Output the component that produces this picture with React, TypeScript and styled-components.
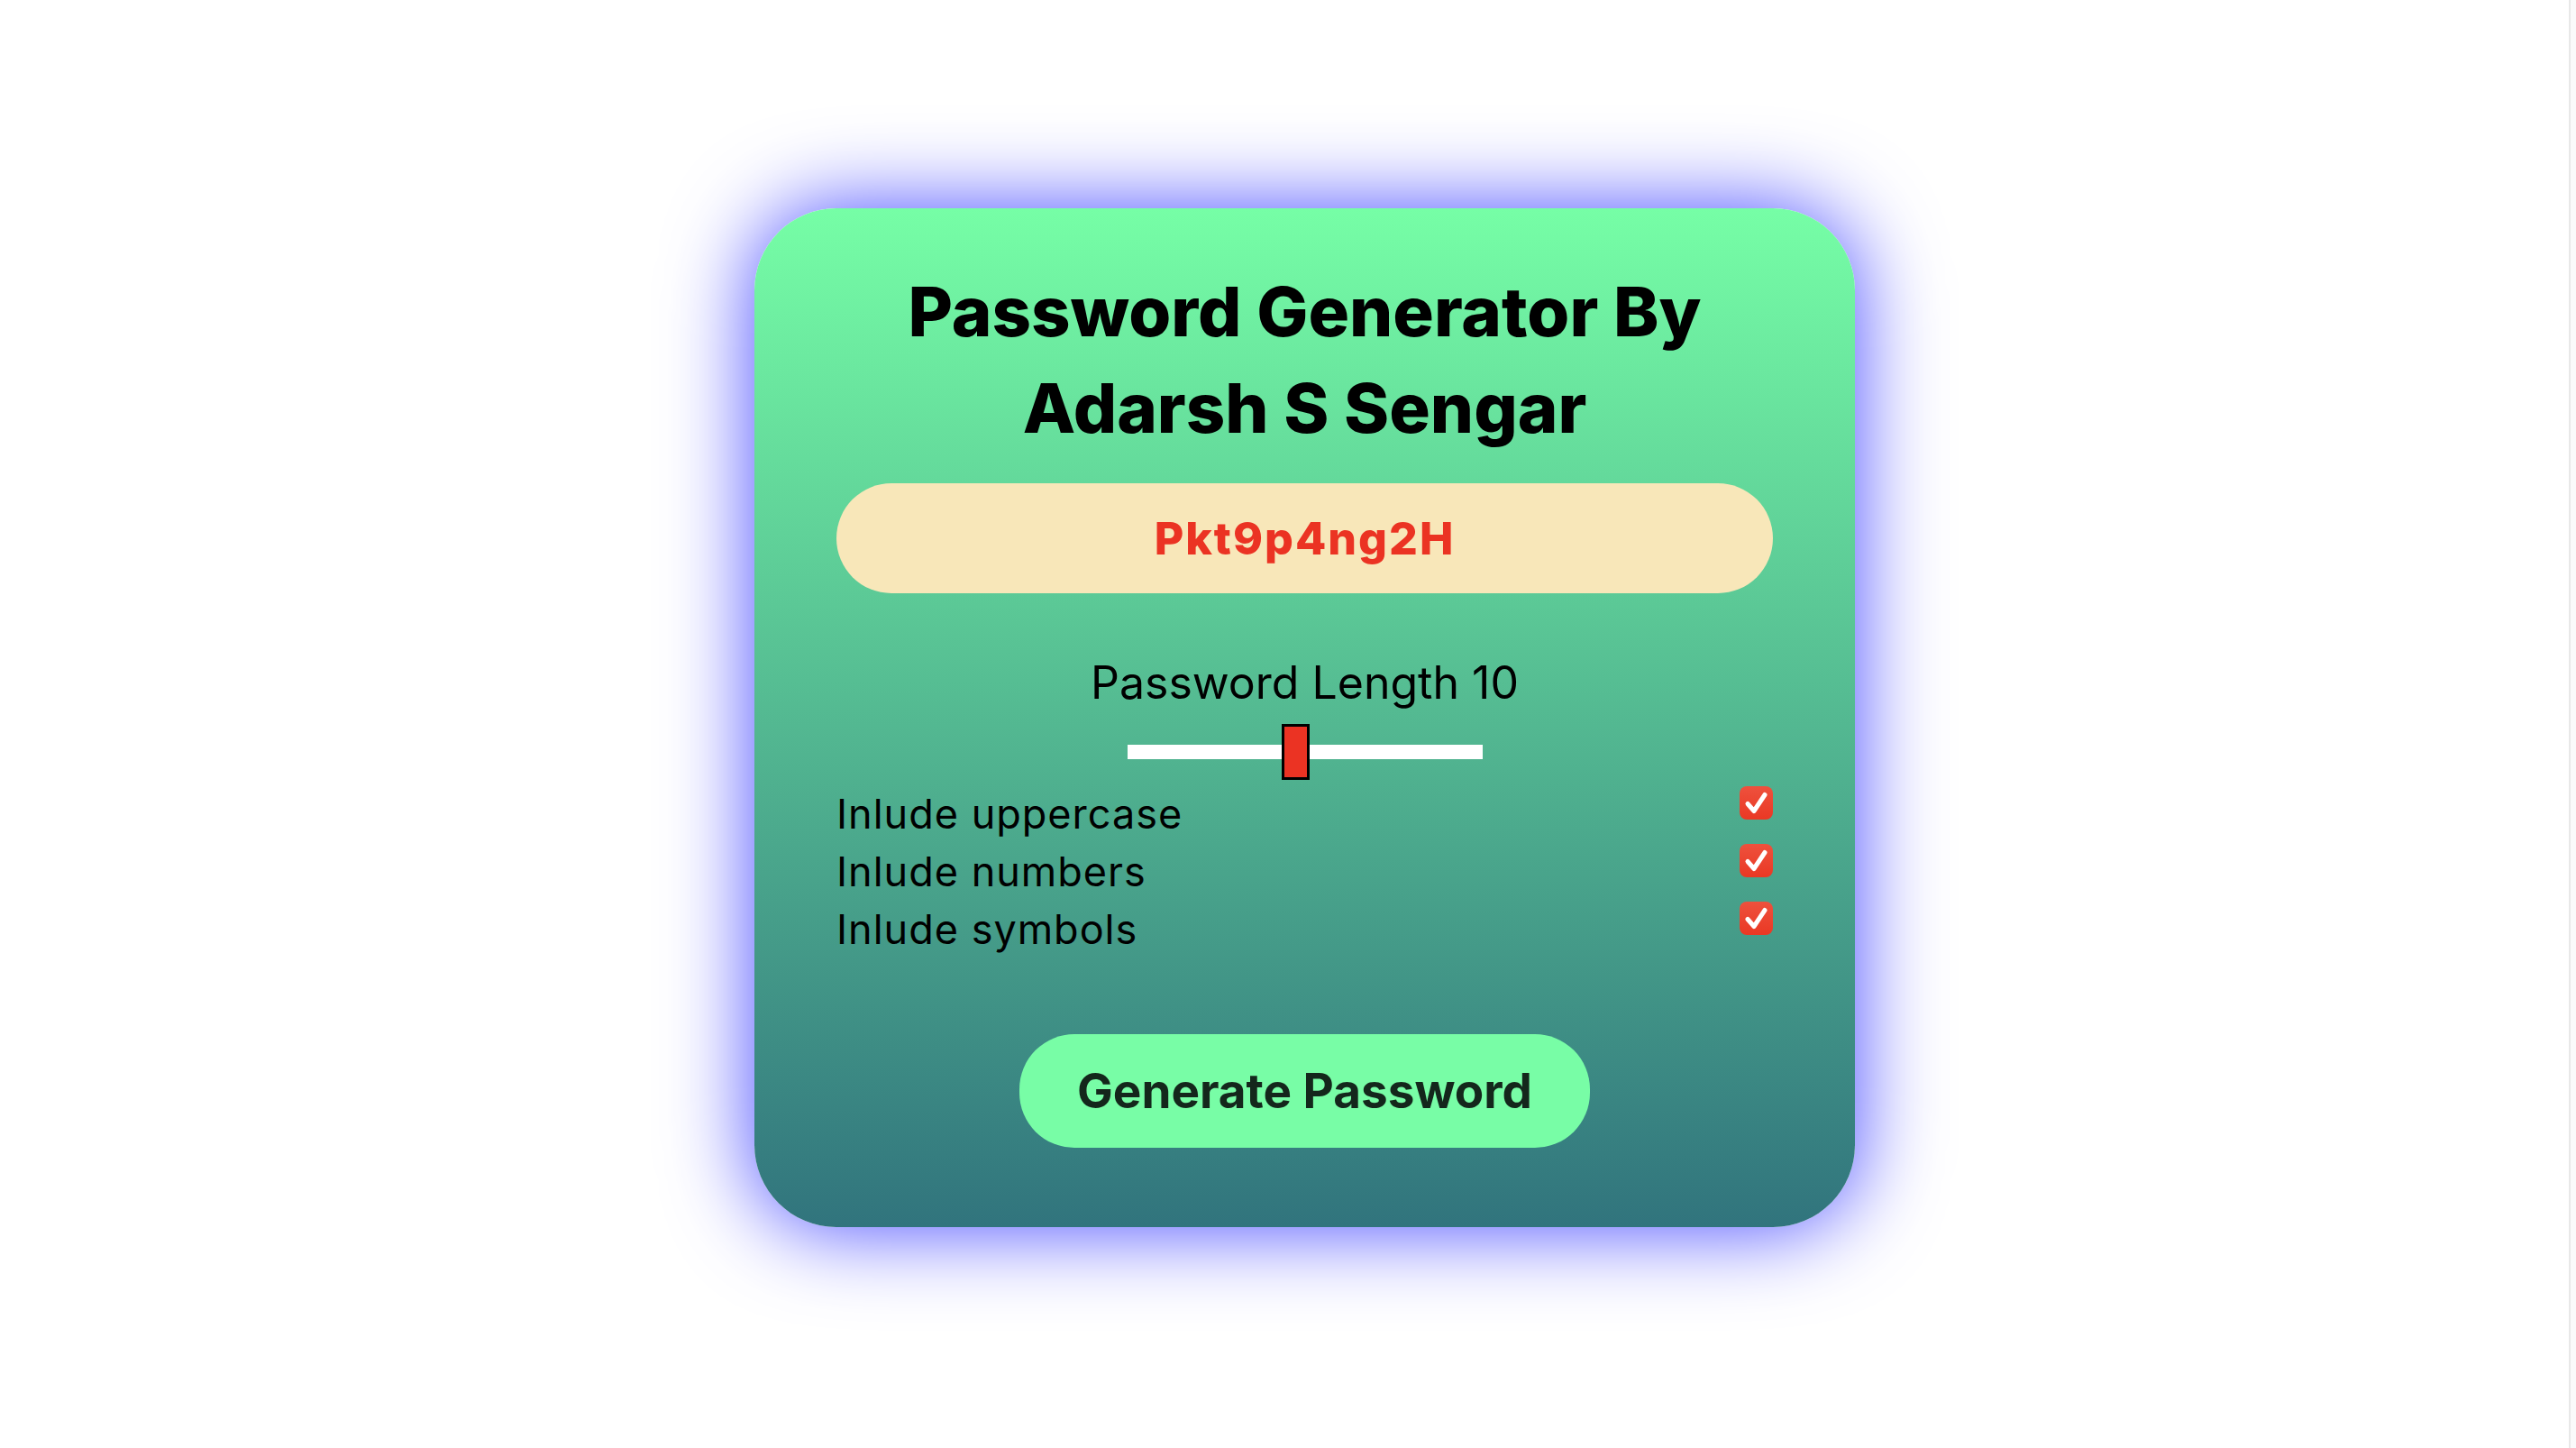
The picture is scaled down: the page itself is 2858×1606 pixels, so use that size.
import React, { useState } from "react";
import styled, { createGlobalStyle } from "styled-components";

const GlobalStyle = createGlobalStyle`
  * {
    box-sizing: border-box;
  }

  body {
    margin: 0;
    background: #ffffff;
    font-family: Inter, "Open Sans", sans-serif;
    color: #000000;
  }
`;

const Page = styled.div`
  display: flex;
  min-height: 100vh;
`;

const Main = styled.main`
  flex: 1;
  display: flex;
  justify-content: center;
  align-items: center;
  padding: 0 0 14px 45px;
`;

const Gutter = styled.aside`
  width: 8px;
  border-left: 2px solid #e8e8e8;
  background: #fafafa;
`;

const Card = styled.form`
  display: flex;
  flex-direction: column;
  align-items: center;
  width: 100%;
  max-width: 1221px;
  padding: 61px 91px 88px;
  border-radius: 91px;
  background: linear-gradient(#76fea6, #31747d);
  box-shadow: 0 0 96px #4447ff;
`;

const Title = styled.h1`
  margin: 0 0 30px;
  font-size: 76px;
  font-weight: 800;
  line-height: 107px;
  text-align: center;
`;

const PasswordField = styled.output`
  width: 100%;
  margin-bottom: 61px;
  border-radius: 61px;
  background: #f8e7b9;
  color: #eb3323;
  font-size: 50px;
  font-weight: 800;
  line-height: 122px;
  letter-spacing: 2px;
  text-align: center;
`;

const LengthLabel = styled.label`
  font-size: 50px;
  line-height: 76px;
`;

const Slider = styled.input`
  appearance: none;
  width: 394px;
  height: 16px;
  margin: 31px 0 22px;
  background: #ffffff;
  cursor: pointer;

  &::-webkit-slider-thumb {
    appearance: none;
    width: 31px;
    height: 62px;
    border: 3px solid #000000;
    border-radius: 0;
    background: #eb3323;
  }
`;

const Options = styled.div`
  width: 100%;
  margin-bottom: 91px;
`;

const OptionRow = styled.div`
  display: flex;
  justify-content: space-between;
  align-items: flex-start;
  height: 64px;
`;

const OptionLabel = styled.label`
  font-size: 45px;
  line-height: 78px;
  letter-spacing: 1px;
`;

const Toggle = styled.span`
  display: grid;
  width: 37px;
  height: 37px;
  margin-top: 8px;
  border-radius: 8px;
  background: linear-gradient(#ee513d, #ea3824);

  > * {
    grid-area: 1 / 1;
  }

  svg {
    width: 37px;
    height: 37px;
    pointer-events: none;
  }

  input:not(:checked) + svg {
    visibility: hidden;
  }
`;

const Checkbox = styled.input`
  appearance: none;
  width: 37px;
  height: 37px;
  margin: 0;
  cursor: pointer;
`;

const GenerateButton = styled.button`
  padding: 0 64px;
  border: 0;
  border-radius: 61px;
  background: #78fda6;
  color: #14271c;
  font-family: inherit;
  font-size: 53px;
  font-weight: 700;
  line-height: 126px;
  cursor: pointer;
`;

const LOWER = "abcdefghijklmnopqrstuvwxyz";
const EXTRAS = {
  uppercase: "ABCDEFGHIJKLMNOPQRSTUVWXYZ",
  numbers: "0123456789",
  symbols: "!@#$%^&*()_+",
};

type Extra = keyof typeof EXTRAS;
const OPTIONS: Extra[] = ["uppercase", "numbers", "symbols"];

interface OptionProps {
  name: Extra;
  checked: boolean;
  onToggle: (name: Extra) => void;
}

function Option({ name, checked, onToggle }: OptionProps) {
  return (
    <OptionRow>
      <OptionLabel htmlFor={name}>Inlude {name}</OptionLabel>
      <Toggle>
        <Checkbox id={name} type="checkbox" checked={checked} onChange={() => onToggle(name)} />
        <svg viewBox="0 0 37 37" aria-hidden="true">
          <path
            d="M9 19.5 16 27.5 28 9.5"
            fill="none"
            stroke="#ffffff"
            strokeWidth="5"
            strokeLinecap="round"
            strokeLinejoin="round"
          />
        </svg>
      </Toggle>
    </OptionRow>
  );
}

export default function App() {
  const [length, setLength] = useState(10);
  const [password, setPassword] = useState("Pkt9p4ng2H");
  const [enabled, setEnabled] = useState<Record<Extra, boolean>>({
    uppercase: true,
    numbers: true,
    symbols: true,
  });

  const toggle = (name: Extra) => setEnabled((prev) => ({ ...prev, [name]: !prev[name] }));

  const generate = (event: React.FormEvent) => {
    event.preventDefault();
    const pool = LOWER + OPTIONS.filter((name) => enabled[name]).map((name) => EXTRAS[name]).join("");
    setPassword(Array.from({ length }, () => pool[Math.floor(Math.random() * pool.length)]).join(""));
  };

  return (
    <>
      <GlobalStyle />
      <Page>
        <Main>
          <Card onSubmit={generate}>
            <Title>
              Password Generator By
              <br />
              Adarsh S Sengar
            </Title>
            <PasswordField htmlFor="length">{password}</PasswordField>
            <LengthLabel htmlFor="length">Password Length {length}</LengthLabel>
            <Slider
              id="length"
              type="range"
              min={1}
              max={20}
              value={length}
              onChange={(event) => setLength(Number(event.target.value))}
            />
            <Options>
              {OPTIONS.map((name) => (
                <Option key={name} name={name} checked={enabled[name]} onToggle={toggle} />
              ))}
            </Options>
            <GenerateButton type="submit">Generate Password</GenerateButton>
          </Card>
        </Main>
        <Gutter />
      </Page>
    </>
  );
}
